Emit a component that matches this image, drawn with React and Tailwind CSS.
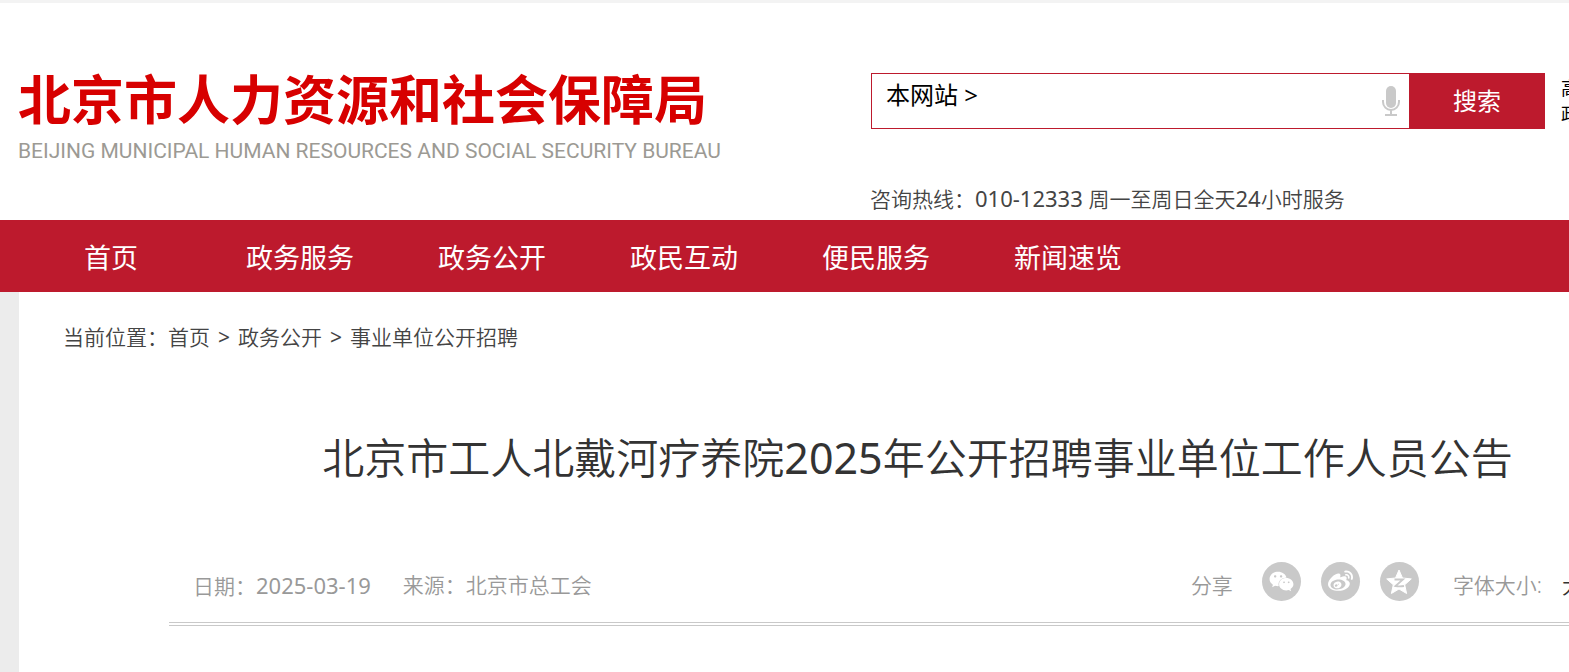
import { FaWeixin, FaWeibo } from 'react-icons/fa';

const navItems = ['政务服务', '政务公开', '政民互动', '便民服务', '新闻速览'];

const MicIcon = () => (
  <svg viewBox="0 0 18 30" className="h-[30px] w-[18px]" fill="none" stroke="#c9c9c9" strokeWidth="2">
    <rect x="4" y="0" width="10" height="22" rx="5" fill="#c9c9c9" stroke="none" />
    <path d="M1 14v2a8 8 0 0 0 16 0v-2" />
    <path d="M9 24v5M3 29h12" />
  </svg>
);

const QzoneIcon = () => (
  <svg viewBox="0 0 28 28" className="h-7 w-7">
    <path
      d="M14 2l3.5 8 8.8.9-6.6 5.9 1.9 8.7L14 21l-7.6 4.5 1.9-8.7L1.7 10.9l8.8-.9z"
      fill="#fff"
      stroke="#fff"
      strokeWidth="1"
      strokeLinejoin="round"
    />
    <path d="M9.5 11.5h8.5l-7.5 6.5c3 .6 6 .5 8.5 0" fill="none" stroke="#c9c9c9" strokeWidth="1.8" />
  </svg>
);

const Digits = ({ children }) => <span className="text-[22px] font-normal">{children}</span>;

const Header = () => (
  <header className="flex h-[220px] items-start border-t-3 border-[#f3f3f3] bg-white pl-[18px]">
    <a href="#" className="mt-[65px] block w-[852px] shrink-0">
      <span className="block text-[53px] leading-[64px] font-bold text-[#d70000]">北京市人力资源和社会保障局</span>
      <span className="block pt-[3px] font-['Roboto',sans-serif] text-[21px] leading-[32px] text-[#9c9a94]">
        BEIJING MUNICIPAL HUMAN RESOURCES AND SOCIAL SECURITY BUREAU
      </span>
    </a>
    <div className="mt-[70px] min-w-0 flex-1">
      <div className="flex pl-px">
        <form className="flex h-14 min-w-0 flex-1 border border-[#bd1a2d]">
          <label htmlFor="keyword" className="pt-1 pl-3.5 text-[24px] leading-[34px] text-black">
            本网站 &gt;
          </label>
          <input id="keyword" type="text" className="min-w-0 flex-1 px-2 text-[24px] outline-none" />
          <button type="button" aria-label="语音" className="px-[9px]">
            <MicIcon />
          </button>
          <button type="submit" className="-my-px -mr-px w-[136px] bg-[#bd1a2d] text-[24px] text-white">
            搜索
          </button>
        </form>
        <div className="ml-4 w-2 overflow-hidden text-[18px] leading-[26px] text-black">
          <a href="#" className="mt-0.5 block w-5">高</a>
          <a href="#" className="block w-5">政</a>
        </div>
      </div>
      <p className="mt-[53px] text-[21px] leading-[32px] font-[350] text-[#444]">
        咨询热线：<Digits>010-12333 </Digits>周一至周日全天<Digits>24</Digits>小时服务
      </p>
    </div>
  </header>
);

const Nav = () => (
  <nav className="flex h-[72px] items-center bg-[#bd1a2d] pt-1 pl-[18px] text-center text-[27px] leading-[40px] text-white">
    <a href="#" className="w-[186px]">首页</a>
    {navItems.map((item) => (
      <a key={item} href="#" className="w-48">
        {item}
      </a>
    ))}
  </nav>
);

const Breadcrumb = () => (
  <div className="flex gap-2 pt-[29px] pl-11 text-[21px] leading-[32px] font-[350] text-[#444]">
    <span>
      当前位置：<a href="#">首页</a>
    </span>
    <span className="font-normal">&gt;</span>
    <a href="#">政务公开</a>
    <span className="font-normal">&gt;</span>
    <a href="#">事业单位公开招聘</a>
  </div>
);

const shareButton = 'flex h-[39px] w-[39px] items-center justify-center rounded-full bg-[#c9c9c9] text-white';

const ArticleMeta = () => (
  <div className="ml-[150px] flex h-16 items-start border-b-4 border-double border-[#c9c9c9] pl-6 text-[21px] leading-[32px] font-[350] text-[#999]">
    <span className="mt-[7px]">
      日期：<Digits>2025-03-19</Digits>
    </span>
    <span className="mt-[7px] ml-8">来源：北京市总工会</span>
    <div className="-mr-[14px] ml-auto flex items-start">
      <span className="mt-[7px]">分享</span>
      <div className="mr-[34px] ml-[29px] flex gap-5">
        <button type="button" aria-label="微信" className={shareButton}>
          <FaWeixin size={25} />
        </button>
        <button type="button" aria-label="微博" className={shareButton}>
          <FaWeibo size={25} />
        </button>
        <button type="button" aria-label="QQ空间" className={shareButton}>
          <QzoneIcon />
        </button>
      </div>
      <span className="mt-[7px]">字体大小:</span>
      <button type="button" className="mt-[7px] ml-5 text-[#333]">大</button>
    </div>
  </div>
);

export default function App() {
  return (
    <div className="min-h-screen overflow-hidden bg-[#ececec] font-['Noto_Sans','Noto_Sans_CJK_SC',sans-serif] whitespace-nowrap">
      <Header />
      <Nav />
      <main className="ml-[19px] min-h-[380px] bg-white">
        <Breadcrumb />
        <h1 className="mt-[73px] pl-[247px] text-center text-[42px] leading-[64px] font-[350] text-[#333]">
          北京市工人北戴河疗养院<span className="text-[43px] font-normal">2025</span>年公开招聘事业单位工作人员公告
        </h1>
        <div className="mt-[72px]">
          <ArticleMeta />
        </div>
      </main>
    </div>
  );
}
